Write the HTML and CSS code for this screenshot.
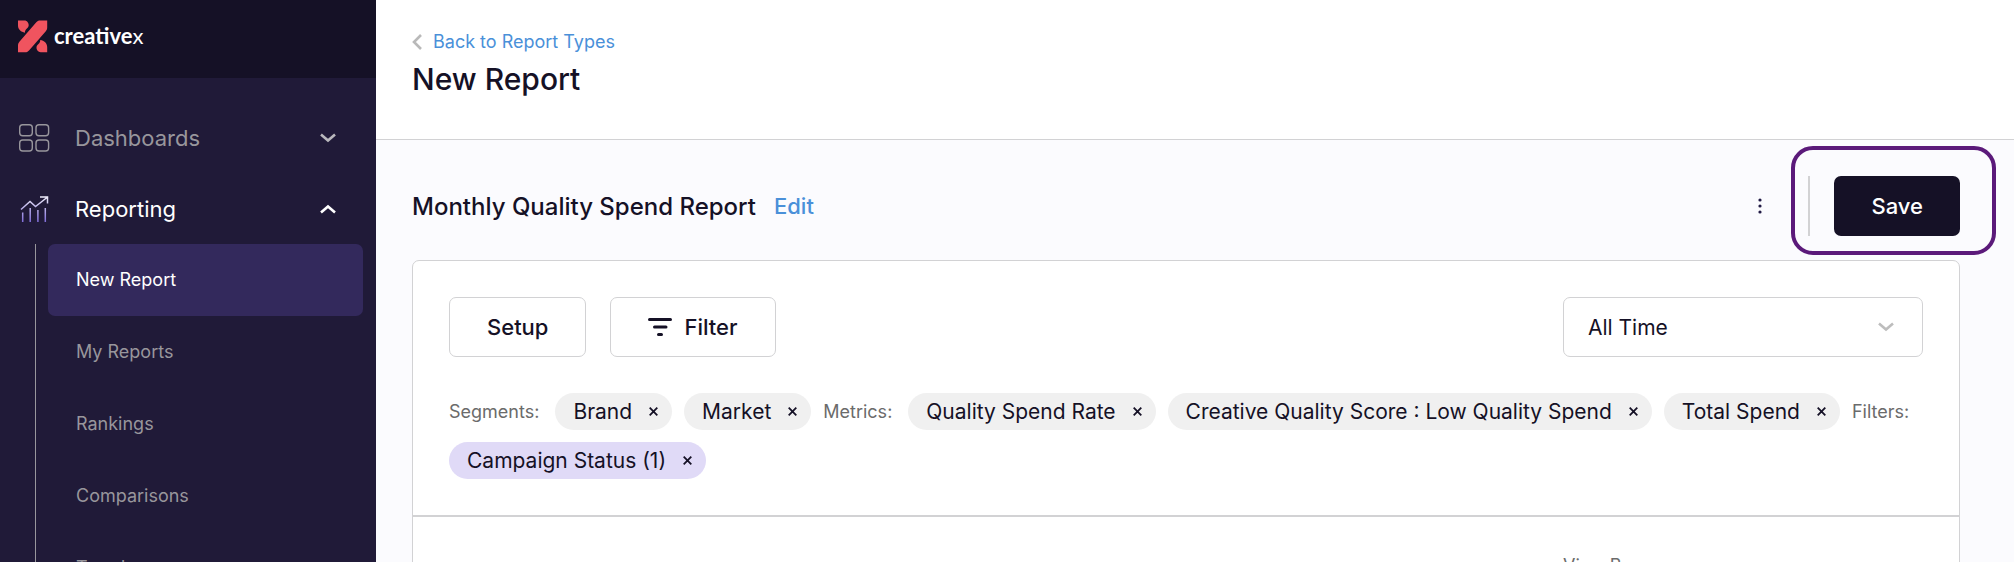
FILE: index.html
```html
<!DOCTYPE html>
<html lang="en">
<head>
<meta charset="utf-8">
<title>New Report – creativex</title>
<link rel="stylesheet" href="styles.css">
</head>
<body>
<div class="app">
  <aside class="sidebar">
    <div class="brand">
      <svg class="brand-mark" width="30" height="33" viewBox="0 0 30 33" fill="#f0545f" aria-hidden="true">
        <path d="M0 .5H6.500C9 .5 10.700 2.800 10.700 5.200C10.700 8.500 6.600 9 7 12.700C3 12 0 9.500 0 5.500z"/>
        <path d="M29.200 .5V7.500C29.200 9 28.800 10 27.800 11.200L11 30.500C9.800 31.900 8.500 32.300 7 32.300H0V25.500C0 24 .4 23 1.400 21.800L18.300 2.300C19.400 1 20.500 .5 22 .5z"/>
        <path d="M29.200 32.300H22.700C20.200 32.300 18.500 30 18.500 27.600C18.500 24.300 22.600 23.800 22.200 20.100C26.200 20.800 29.200 23.300 29.200 27.300z"/>
      </svg>
      <span class="brand-name">creative<span class="brand-x">x</span></span>
    </div>
    <nav class="nav" aria-label="Main">
      <button class="nav-item" type="button">
        <svg class="nav-icon" width="32" height="30" viewBox="0 0 32 30" fill="none" stroke="#98969c" stroke-width="1.400" aria-hidden="true">
          <rect x="1.700" y="1.700" width="12.600" height="11" rx="3"/>
          <rect x="18" y="1.700" width="12.600" height="11" rx="3"/>
          <rect x="1.700" y="17" width="12.600" height="11" rx="3"/>
          <rect x="18" y="17" width="12.600" height="11" rx="3"/>
        </svg>
        <span class="nav-label">Dashboards</span>
        <svg class="chevron" width="16" height="10" viewBox="0 0 16 10" fill="none" stroke="#b9b8bd" stroke-width="2.600" aria-hidden="true"><path d="M1 1.500l7 6 7-6"/></svg>
      </button>
      <button class="nav-item nav-item-open" type="button" aria-expanded="true">
        <svg class="nav-icon" width="32" height="30" viewBox="0 0 32 30" fill="none" stroke="url(#chart)" stroke-width="1.500" aria-hidden="true">
          <defs><linearGradient id="chart" gradientUnits="userSpaceOnUse" x1="0" y1="2" x2="0" y2="28"><stop offset="0" stop-color="#f1effb"/><stop offset="1" stop-color="#7f6cd8"/></linearGradient></defs>
          <path d="M3 15.500L12 7.500L17.500 12.500L29 3.500M22 3h7.500v6.500"/>
          <path d="M4.700 18.500V28M12.200 14V28M19.900 16V28M27.300 14V28"/>
        </svg>
        <span class="nav-label">Reporting</span>
        <svg class="chevron" width="16" height="10" viewBox="0 0 16 10" fill="none" stroke="#fff" stroke-width="2.600" aria-hidden="true"><path d="M1 8.500l7-6 7 6"/></svg>
      </button>
      <ul class="subnav">
        <li><a class="subnav-link subnav-link-active" href="#new" aria-current="page">New Report</a></li>
        <li><a class="subnav-link" href="#my">My Reports</a></li>
        <li><a class="subnav-link" href="#rankings">Rankings</a></li>
        <li><a class="subnav-link" href="#comparisons">Comparisons</a></li>
        <li><a class="subnav-link" href="#trends">Trends</a></li>
      </ul>
    </nav>
  </aside>
  <main class="main">
    <header class="page-header">
      <a class="back" href="#types">
        <svg width="10" height="16" viewBox="0 0 10 16" fill="none" stroke="#b9b9b9" stroke-width="2.600" aria-hidden="true"><path d="M9 1L2 8l7 7"/></svg>
        Back to Report Types
      </a>
      <h1 class="page-title">New Report</h1>
    </header>
    <div class="content">
      <div class="report-head">
        <h2 class="report-title">Monthly Quality Spend Report</h2>
        <a class="edit" href="#edit">Edit</a>
        <button class="more" type="button" aria-label="More options">
          <svg width="4" height="16" viewBox="0 0 4 16" fill="#211a45" aria-hidden="true"><circle cx="2" cy="2" r="1.600"/><circle cx="2" cy="8" r="1.600"/><circle cx="2" cy="14" r="1.600"/></svg>
        </button>
        <div class="save-group">
          <button class="save" type="button">Save</button>
        </div>
      </div>
      <section class="card">
        <div class="card-top">
          <div class="toolbar">
            <button class="button" type="button">Setup</button>
            <button class="button" type="button">
              <svg width="24" height="18" viewBox="0 0 24 18" fill="none" stroke="#151126" stroke-width="3" stroke-linecap="round" aria-hidden="true"><path d="M1.500 1.500h21M6.500 9h11.500M10.500 16.500h3"/></svg>
              Filter
            </button>
            <div class="select-wrap">
              <select class="select" aria-label="Date range"><option>All Time</option></select>
              <svg class="select-arrow" width="16" height="10" viewBox="0 0 16 10" fill="none" stroke="#bdbdbd" stroke-width="2.600" aria-hidden="true"><path d="M1 1.500l7 6 7-6"/></svg>
            </div>
          </div>
          <div class="chips">
            <span class="chips-label">Segments:</span>
            <span class="chip">Brand <button class="remove" type="button" aria-label="Remove Brand"><svg width="9" height="9" viewBox="0 0 9 9" aria-hidden="true"><path d="M.7.7l7.600 7.600M8.300.7L.7 8.300"/></svg></button></span>
            <span class="chip">Market <button class="remove" type="button" aria-label="Remove Market"><svg width="9" height="9" viewBox="0 0 9 9" aria-hidden="true"><path d="M.7.7l7.600 7.600M8.300.7L.7 8.300"/></svg></button></span>
            <span class="chips-label">Metrics:</span>
            <span class="chip">Quality Spend Rate <button class="remove" type="button" aria-label="Remove Quality Spend Rate"><svg width="9" height="9" viewBox="0 0 9 9" aria-hidden="true"><path d="M.7.7l7.600 7.600M8.300.7L.7 8.300"/></svg></button></span>
            <span class="chip">Creative Quality Score : Low Quality Spend <button class="remove" type="button" aria-label="Remove Low Quality Spend"><svg width="9" height="9" viewBox="0 0 9 9" aria-hidden="true"><path d="M.7.7l7.600 7.600M8.300.7L.7 8.300"/></svg></button></span>
            <span class="chip">Total Spend <button class="remove" type="button" aria-label="Remove Total Spend"><svg width="9" height="9" viewBox="0 0 9 9" aria-hidden="true"><path d="M.7.7l7.600 7.600M8.300.7L.7 8.300"/></svg></button></span>
            <span class="chips-label">Filters:</span>
            <span class="chip chip-filter">Campaign Status (1) <button class="remove" type="button" aria-label="Remove Campaign Status"><svg width="9" height="9" viewBox="0 0 9 9" aria-hidden="true"><path d="M.7.7l7.600 7.600M8.300.7L.7 8.300"/></svg></button></span>
          </div>
        </div>
        <div class="card-body">
          <span class="view-by">View By</span>
        </div>
      </section>
    </div>
  </main>
</div>
</body>
</html>
```
FILE: styles.css
```css
* { box-sizing: border-box; }

body {
  margin: 0;
  height: 100vh;
  overflow: hidden;
  font-family: Inter, "Liberation Sans", sans-serif;
  font-size: 21px;
  color: #151126;
  background: #fbfbfe;
}

button, select { font: inherit; color: inherit; }
button { border: 0; background: none; padding: 0; cursor: pointer; }
a { text-decoration: none; }

.app { display: flex; height: 100%; }

.sidebar { flex: 0 0 376px; background: #201a38; overflow: hidden; }
.brand {
  display: flex;
  align-items: center;
  gap: 6px;
  height: 78px;
  padding: 0 18px 6px;
  background: #151126;
}
.brand-name {
  font-family: Lato, sans-serif;
  font-weight: 700;
  font-size: 22px;
  line-height: 28px;
  color: #fff;
}
.brand-x { font-weight: 400; }

.nav { padding-top: 24px; }
.nav-item {
  display: flex;
  align-items: center;
  width: 100%;
  height: 71px;
  padding: 0 40px 0 18px;
  color: #98969c;
  font-size: 22px;
  text-align: left;
}
.nav-item-open { color: #fff; }
.nav-icon { flex: none; }
.nav-label { flex: 1; padding-left: 25px; }

.subnav {
  list-style: none;
  margin: 0 13px 0 35px;
  padding: 0 0 0 12px;
  border-left: 1px solid #98969c;
}
.subnav-link {
  display: flex;
  align-items: center;
  height: 72px;
  padding: 0 28px 2px;
  border-radius: 7px;
  font-size: 18px;
  color: #98969c;
}
.subnav-link-active { background: #33295c; color: #fff; }

.main { flex: 1; min-width: 0; overflow: hidden; }
.page-header {
  height: 140px;
  padding: 30px 36px 0;
  background: #fff;
  border-bottom: 1px solid #d2d2d4;
}
.back {
  display: inline-flex;
  align-items: center;
  gap: 11px;
  font-size: 18px;
  line-height: 24px;
  color: #4a90d9;
}
.page-title { margin: 6px 0 0; font-size: 30px; line-height: 36px; font-weight: 500; }

.content { padding: 36px 54px 0 36px; }
.report-head { display: flex; align-items: center; height: 60px; }
.report-title { margin: 0; font-size: 24px; font-weight: 500; }
.edit { margin-left: 18px; font-size: 22px; font-weight: 500; color: #4a90d9; }
.more { display: flex; justify-content: center; width: 24px; margin: 0 36px 0 auto; }
.save-group {
  position: relative;
  padding-left: 24px;
  border-left: 2px solid #d2d2d4;
}
.save-group::after {
  content: "";
  position: absolute;
  inset: -30px -36px -19px -19px;
  border: 4px solid #5b1a7a;
  border-radius: 22px;
  pointer-events: none;
}
.save {
  height: 60px;
  padding: 0 37px;
  border-radius: 7px;
  background: #151126;
  color: #fff;
  font-size: 22px;
  font-weight: 500;
}

.card {
  margin-top: 24px;
  min-height: 400px;
  background: #fff;
  border: 1px solid #d2d2d4;
  border-radius: 7px;
}
.card-top { padding: 36px; border-bottom: 2px solid #d2d2d4; }
.toolbar { display: flex; gap: 24px; }
.button {
  display: flex;
  align-items: center;
  gap: 12px;
  height: 60px;
  padding: 0 37px;
  border: 1px solid #d2d2d4;
  border-radius: 7px;
  background: #fff;
  font-size: 22px;
  font-weight: 500;
}
.select-wrap { position: relative; width: 360px; margin-left: auto; }
.select {
  appearance: none;
  width: 100%;
  height: 60px;
  padding: 0 60px 0 24px;
  border: 1px solid #d2d2d4;
  border-radius: 7px;
  background: #fff;
}
.select-arrow { position: absolute; right: 29px; top: 25px; pointer-events: none; }

.chips { display: flex; flex-wrap: wrap; align-items: center; gap: 12px; margin-top: 36px; }
.chips-label { padding-right: 4px; font-size: 18px; color: #6b6b6b; }
.chip {
  display: flex;
  align-items: center;
  gap: 17px;
  height: 37px;
  padding: 0 14px 0 18px;
  border-radius: 19px;
  background: #f0f0f0;
}
.chip-filter { background: #e0daf7; }
.remove { display: flex; stroke: #151126; stroke-width: 1.800px; }

.card-body { display: flex; justify-content: flex-end; padding: 37px 36px 0; }
.view-by { width: 360px; font-size: 18px; line-height: 24px; color: #6b6b6b; }
```
